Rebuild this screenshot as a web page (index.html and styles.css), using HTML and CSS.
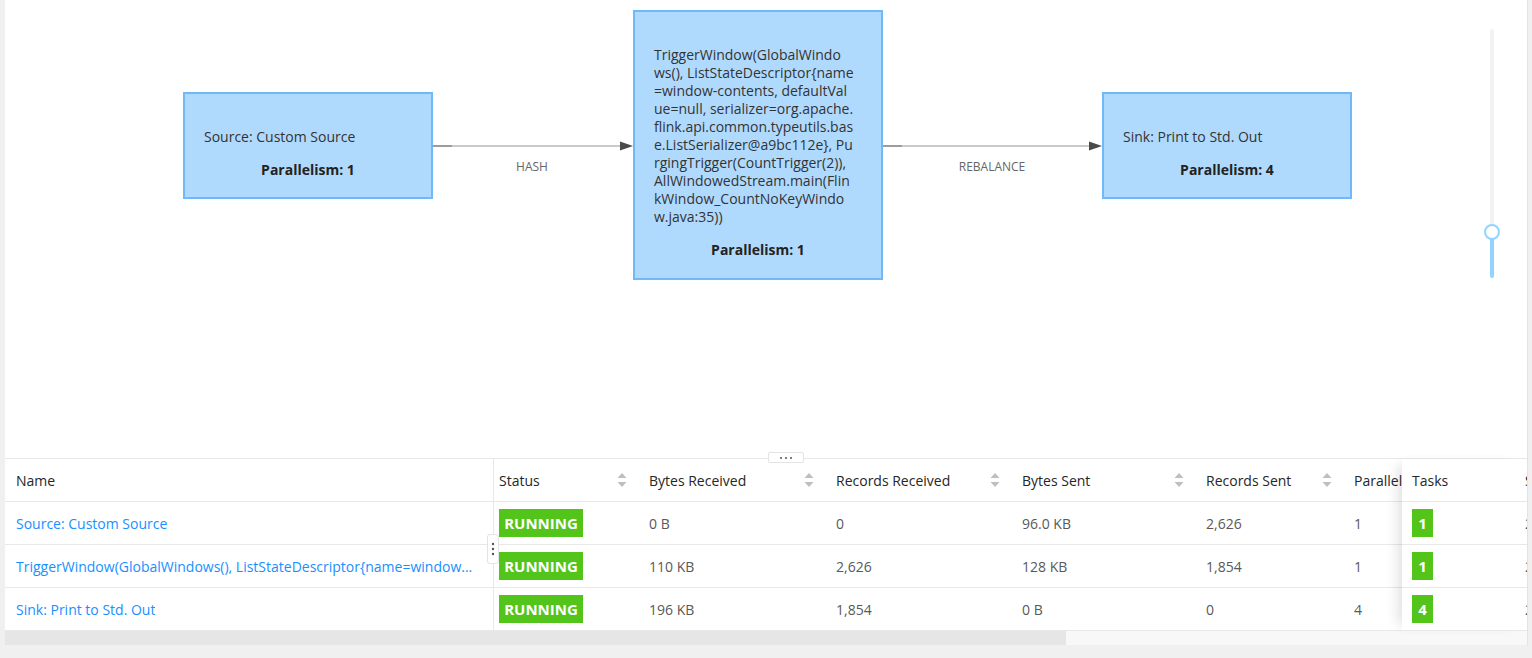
FILE: index.html
```html
<!DOCTYPE html>
<html lang="en">
<head>
    <meta charset="UTF-8">
    <meta name="viewport" content="width=device-width, initial-scale=1.0">
    <title>Job Overview</title>
    <link rel="stylesheet" href="styles.css">
</head>
<body>
    <div class="panel">
        <!-- job graph -->
        <div class="graph">
            <svg class="edges" width="1523" height="458" viewBox="0 0 1523 458">
                <line x1="427" y1="146" x2="618" y2="146" class="edge-line"/>
                <line x1="427" y1="146" x2="447" y2="146" class="edge-start"/>
                <polygon points="615,141.5 628,146 615,150.5" class="edge-arrow"/>
                <text x="527" y="171" text-anchor="middle" class="edge-label">HASH</text>

                <line x1="877" y1="146" x2="1087" y2="146" class="edge-line"/>
                <line x1="877" y1="146" x2="897" y2="146" class="edge-start"/>
                <polygon points="1084,141.5 1097,146 1084,150.5" class="edge-arrow"/>
                <text x="987" y="171" text-anchor="middle" class="edge-label">REBALANCE</text>
            </svg>

            <div class="node node-source">
                <div class="node-name"><span>Source: Custom Source</span></div>
                <div class="node-parallelism">Parallelism: 1</div>
            </div>

            <div class="node node-window">
                <div class="node-name">
                    <span>TriggerWindow(GlobalWindo</span>
                    <span>ws(), ListStateDescriptor{name</span>
                    <span>=window-contents, defaultVal</span>
                    <span>ue=null, serializer=org.apache.</span>
                    <span>flink.api.common.typeutils.bas</span>
                    <span>e.ListSerializer@a9bc112e}, Pu</span>
                    <span>rgingTrigger(CountTrigger(2)),</span>
                    <span>AllWindowedStream.main(Flin</span>
                    <span>kWindow_CountNoKeyWindo</span>
                    <span>w.java:35))</span>
                </div>
                <div class="node-parallelism">Parallelism: 1</div>
            </div>

            <div class="node node-sink">
                <div class="node-name"><span>Sink: Print to Std. Out</span></div>
                <div class="node-parallelism">Parallelism: 4</div>
            </div>

            <div class="zoom-slider">
                <div class="zoom-fill"></div>
            </div>
            <div class="zoom-handle"></div>
        </div>

        <!-- vertex table -->
        <div class="table-area">
            <div class="split-handle">
                <svg width="14" height="4" viewBox="0 0 14 4"><circle cx="2" cy="2" r="1"/><circle cx="7" cy="2" r="1"/><circle cx="12" cy="2" r="1"/></svg>
            </div>

            <div class="table-body">
                <div class="scroll-part">
                    <div class="row head">
                        <div class="cell name-cell">Name</div>
                        <div class="cell status-cell sortable">Status <svg class="sorter" width="10" height="16" viewBox="0 0 10 16"><path d="M0.5 6 L5 1 L9.5 6 Z"/><path d="M0.5 10 L5 15 L9.5 10 Z"/></svg></div>
                        <div class="cell sortable">Bytes Received <svg class="sorter" width="10" height="16" viewBox="0 0 10 16"><path d="M0.5 6 L5 1 L9.5 6 Z"/><path d="M0.5 10 L5 15 L9.5 10 Z"/></svg></div>
                        <div class="cell sortable">Records Received <svg class="sorter" width="10" height="16" viewBox="0 0 10 16"><path d="M0.5 6 L5 1 L9.5 6 Z"/><path d="M0.5 10 L5 15 L9.5 10 Z"/></svg></div>
                        <div class="cell sortable">Bytes Sent <svg class="sorter" width="10" height="16" viewBox="0 0 10 16"><path d="M0.5 6 L5 1 L9.5 6 Z"/><path d="M0.5 10 L5 15 L9.5 10 Z"/></svg></div>
                        <div class="cell sortable">Records Sent <svg class="sorter" width="10" height="16" viewBox="0 0 10 16"><path d="M0.5 6 L5 1 L9.5 6 Z"/><path d="M0.5 10 L5 15 L9.5 10 Z"/></svg></div>
                        <div class="cell sortable">Parallelism <svg class="sorter" width="10" height="16" viewBox="0 0 10 16"><path d="M0.5 6 L5 1 L9.5 6 Z"/><path d="M0.5 10 L5 15 L9.5 10 Z"/></svg></div>
                    </div>
                    <div class="row">
                        <div class="cell name-cell"><a href="#" class="vertex-link">Source: Custom Source</a></div>
                        <div class="cell status-cell"><span class="badge">RUNNING</span></div>
                        <div class="cell">0 B</div>
                        <div class="cell">0</div>
                        <div class="cell">96.0 KB</div>
                        <div class="cell">2,626</div>
                        <div class="cell">1</div>
                    </div>
                    <div class="row">
                        <div class="cell name-cell"><a href="#" class="vertex-link" title="TriggerWindow(GlobalWindows(), ListStateDescriptor{name=window-contents, defaultValue=null, serializer=org.apache.flink.api.common.typeutils.base.ListSerializer@a9bc112e}, PurgingTrigger(CountTrigger(2)), AllWindowedStream.main(FlinkWindow_CountNoKeyWindow.java:35))">TriggerWindow(GlobalWindows(), ListStateDescriptor{name=window...</a></div>
                        <div class="cell status-cell"><span class="badge">RUNNING</span></div>
                        <div class="cell">110 KB</div>
                        <div class="cell">2,626</div>
                        <div class="cell">128 KB</div>
                        <div class="cell">1,854</div>
                        <div class="cell">1</div>
                    </div>
                    <div class="row">
                        <div class="cell name-cell"><a href="#" class="vertex-link">Sink: Print to Std. Out</a></div>
                        <div class="cell status-cell"><span class="badge">RUNNING</span></div>
                        <div class="cell">196 KB</div>
                        <div class="cell">1,854</div>
                        <div class="cell">0 B</div>
                        <div class="cell">0</div>
                        <div class="cell">4</div>
                    </div>
                </div>

                <div class="fixed-part">
                    <div class="row head">
                        <div class="cell task-cell">Tasks</div>
                        <div class="cell">Start Time</div>
                    </div>
                    <div class="row">
                        <div class="cell task-cell"><span class="badge badge-count">1</span></div>
                        <div class="cell">2020-06-19 10:21:04</div>
                    </div>
                    <div class="row">
                        <div class="cell task-cell"><span class="badge badge-count">1</span></div>
                        <div class="cell">2020-06-19 10:21:04</div>
                    </div>
                    <div class="row">
                        <div class="cell task-cell"><span class="badge badge-count">4</span></div>
                        <div class="cell">2020-06-19 10:21:04</div>
                    </div>
                </div>
            </div>

            <div class="scrollbar">
                <div class="scrollbar-thumb"></div>
            </div>

            <div class="col-handle">
                <svg width="4" height="14" viewBox="0 0 4 14"><circle cx="2" cy="2" r="1.2"/><circle cx="2" cy="7" r="1.2"/><circle cx="2" cy="12" r="1.2"/></svg>
            </div>
        </div>
    </div>
</body>
</html>
```

FILE: styles.css
```css
* {
    margin: 0;
    padding: 0;
    box-sizing: border-box;
}

body {
    background: #f0f0f0;
    font-family: "Open Sans", "Liberation Sans", sans-serif;
    font-size: 14px;
    color: #595959;
    overflow: hidden;
}

.panel {
    width: 1523px;
    height: 645px;
    margin-left: 5px;
    background: #fff;
    border-right: 1px solid #e3e3e3;
}

/* graph */

.graph {
    position: relative;
    height: 458px;
}

.edges {
    position: absolute;
    left: 0;
    top: 0;
}

.edge-line {
    stroke: #b8b8b8;
    stroke-width: 1.5;
}

.edge-start {
    stroke: #8c8c8c;
    stroke-width: 1.5;
}

.edge-arrow {
    fill: #4a4a4a;
}

.edge-label {
    font-family: "Open Sans", "Liberation Sans", sans-serif;
    font-size: 12px;
    fill: #666;
}

.node {
    position: absolute;
    width: 250px;
    padding: 34px 19px 0;
    background: #b0dafd;
    border: 2px solid #6fb9f7;
    color: #333;
    line-height: 18px;
}

.node-source {
    left: 178px;
    top: 92px;
    height: 107px;
}

.node-window {
    left: 628px;
    top: 10px;
    height: 270px;
}

.node-sink {
    left: 1097px;
    top: 92px;
    height: 107px;
}

.node-name span {
    display: block;
    white-space: nowrap;
}

.node-parallelism {
    margin-top: 15px;
    text-align: center;
    font-weight: 700;
    color: #222;
}

.zoom-slider {
    position: absolute;
    left: 1485px;
    top: 29px;
    width: 4px;
    height: 249px;
    border-radius: 2px;
    background: #f2f2f2;
    display: flex;
    flex-direction: column;
    justify-content: flex-end;
}

.zoom-fill {
    height: 46px;
    border-radius: 2px;
    background: #91d5ff;
}

.zoom-handle {
    position: absolute;
    left: 1479px;
    top: 224px;
    width: 16px;
    height: 16px;
    border-radius: 50%;
    background: #fff;
    border: 2px solid #91d5ff;
}

/* table */

.table-area {
    position: relative;
    border-top: 1px solid #e8e8e8;
}

.split-handle {
    position: absolute;
    left: 763px;
    top: -7px;
    width: 36px;
    height: 11px;
    background: #fff;
    border: 1px solid #e3e3e3;
    border-radius: 2px;
    display: flex;
    align-items: center;
    justify-content: center;
    fill: #555;
}

.col-handle {
    position: absolute;
    left: 482px;
    top: 75px;
    width: 12px;
    height: 30px;
    background: #fff;
    border: 1px solid #e3e3e3;
    border-radius: 3px;
    display: flex;
    align-items: center;
    justify-content: center;
    fill: #555;
}

.table-body {
    display: flex;
}

.scroll-part {
    width: 1397px;
    overflow: hidden;
}

.fixed-part {
    position: relative;
    width: 125px;
    overflow: hidden;
    background: #fff;
    box-shadow: -10px 0 12px -6px rgba(0, 0, 0, 0.12);
}

.row {
    display: grid;
    height: 43px;
    border-bottom: 1px solid #e8e8e8;
}

.scroll-part .row {
    grid-template-columns: 489px 143px 187px 186px 184px 148px 150px;
    width: 1487px;
}

.fixed-part .row {
    grid-template-columns: 111px 150px;
    width: 261px;
}

.cell {
    display: flex;
    align-items: center;
    padding: 0 12px;
    white-space: nowrap;
    overflow: hidden;
}

.head .cell {
    color: #262626;
}

.sortable {
    justify-content: space-between;
    padding-right: 10px;
}

.sorter {
    flex-shrink: 0;
    fill: #bfbfbf;
}

.name-cell {
    border-right: 1px solid #e8e8e8;
    padding-left: 11px;
    padding-right: 12px;
}

.status-cell {
    padding-left: 5px;
}

.task-cell {
    padding-left: 10px;
}

.vertex-link {
    display: block;
    color: #1890ff;
    text-decoration: none;
    overflow: hidden;
    text-overflow: ellipsis;
}

.badge {
    display: inline-block;
    width: 84px;
    height: 28px;
    line-height: 28px;
    text-align: center;
    background: #52c41a;
    color: #fff;
    font-weight: 700;
    font-size: 15px;
}

.badge-count {
    width: 21px;
}

.scrollbar {
    height: 14px;
    background: #f8f8f8;
}

.scrollbar-thumb {
    width: 1061px;
    height: 14px;
    background: #e6e6e6;
}
```
